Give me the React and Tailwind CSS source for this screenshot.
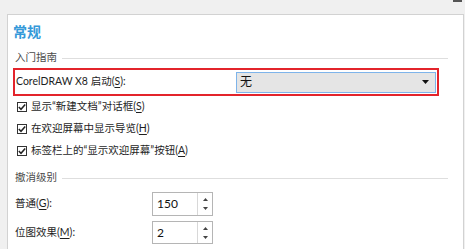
const font = { fontFamily: 'Lato, "Noto Sans CJK SC", sans-serif' }

function Key({ k }) {
  return (
    <>
      (<span className="underline underline-offset-2">{k}</span>)
    </>
  )
}

function GroupHeader({ title, className = '' }) {
  return (
    <div className={`flex items-center gap-[5px] pl-[7px] pr-[15px] ${className}`}>
      <span className="text-[10.5px] text-[#4a4a4a] shrink-0">{title}</span>
      <div className="h-px flex-1 bg-[#dedede]" />
    </div>
  )
}

function CheckRow({ children }) {
  return (
    <div className="flex items-center h-[22px] pl-[9px] gap-[4px]">
      <div className="w-[10px] h-[10px] border border-[#333] bg-white flex items-center justify-center">
        <svg width="8" height="8" viewBox="0 0 8 8" fill="none" stroke="#222" strokeWidth="1.5">
          <path d="M0.8 4 L3 6.3 L7.2 1.4" />
        </svg>
      </div>
      <span className="text-[10.5px] text-[#1e1e1e]">{children}</span>
    </div>
  )
}

function Spin({ value, className = '' }) {
  return (
    <div className={`flex w-[61px] border border-[#b5b5b5] bg-white ${className}`}>
      <div className="flex-1 flex items-center pl-[4px] text-[12px] text-[#111]">{value}</div>
      <div className="w-[15px] border-l border-[#d8d8d8] flex flex-col items-center justify-center gap-[6px]">
        <svg width="5" height="3" viewBox="0 0 5 3"><path d="M0 3 L2.5 0 L5 3z" fill="#444" /></svg>
        <svg width="5" height="3" viewBox="0 0 5 3"><path d="M0 0 L2.5 3 L5 0z" fill="#444" /></svg>
      </div>
    </div>
  )
}

export default function App() {
  return (
    <div className="relative w-[465px] h-[249px] overflow-hidden bg-[#f0f0f0]" style={font}>
      {/* cut-off window control at top right */}
      <div className="absolute right-[3px] top-0 w-[9px] h-[2px] bg-[#555]" />

      <div className="ml-[7px] mt-[14px] w-[457px] h-[260px] border border-[#d2d2d2] bg-white">
        {/* Title */}
        <div className="h-[32px] flex items-center pl-[5px]">
          <span className="text-[14px] font-bold text-[#3499d9]">常规</span>
        </div>

        <GroupHeader title="入门指南" className="h-[20px] mt-px" />

        {/* Highlighted startup row */}
        <div className="ml-[5px] w-[426px] h-[28px] border-2 border-[#e3242b] flex items-center">
          <span className="w-[221px] pl-[1px] text-[10.5px] text-[#1e1e1e]">
            CorelDRAW X8 启动<Key k="S" />:
          </span>
          <div className="w-[200px] h-[21px] border border-[#7eb4ea] bg-[#e5e5e5] flex items-center justify-between pl-[3px] pr-[6px]">
            <span className="text-[12px] text-[#111]">无</span>
            <svg width="7" height="4" viewBox="0 0 7 4"><path d="M0 0 L3.5 4 L7 0z" fill="#111" /></svg>
          </div>
        </div>

        <CheckRow>显示“新建文档”对话框<Key k="S" /></CheckRow>
        <CheckRow>在欢迎屏幕中显示导览<Key k="H" /></CheckRow>
        <CheckRow>标签栏上的“显示欢迎屏幕”按钮<Key k="A" /></CheckRow>

        <GroupHeader title="撤消级别" className="h-[20px] mt-[6px]" />

        <div className="flex items-center h-[24px] mt-[4px] pl-[7px]">
          <span className="w-[137px] text-[10.5px] text-[#1e1e1e]">普通<Key k="G" />:</span>
          <Spin value="150" className="h-[24px]" />
        </div>
        <div className="flex items-center h-[23px] mt-[5px] pl-[7px]">
          <span className="w-[137px] text-[10.5px] text-[#1e1e1e]">位图效果<Key k="M" />:</span>
          <Spin value="2" className="h-[23px]" />
        </div>
      </div>
    </div>
  )
}
